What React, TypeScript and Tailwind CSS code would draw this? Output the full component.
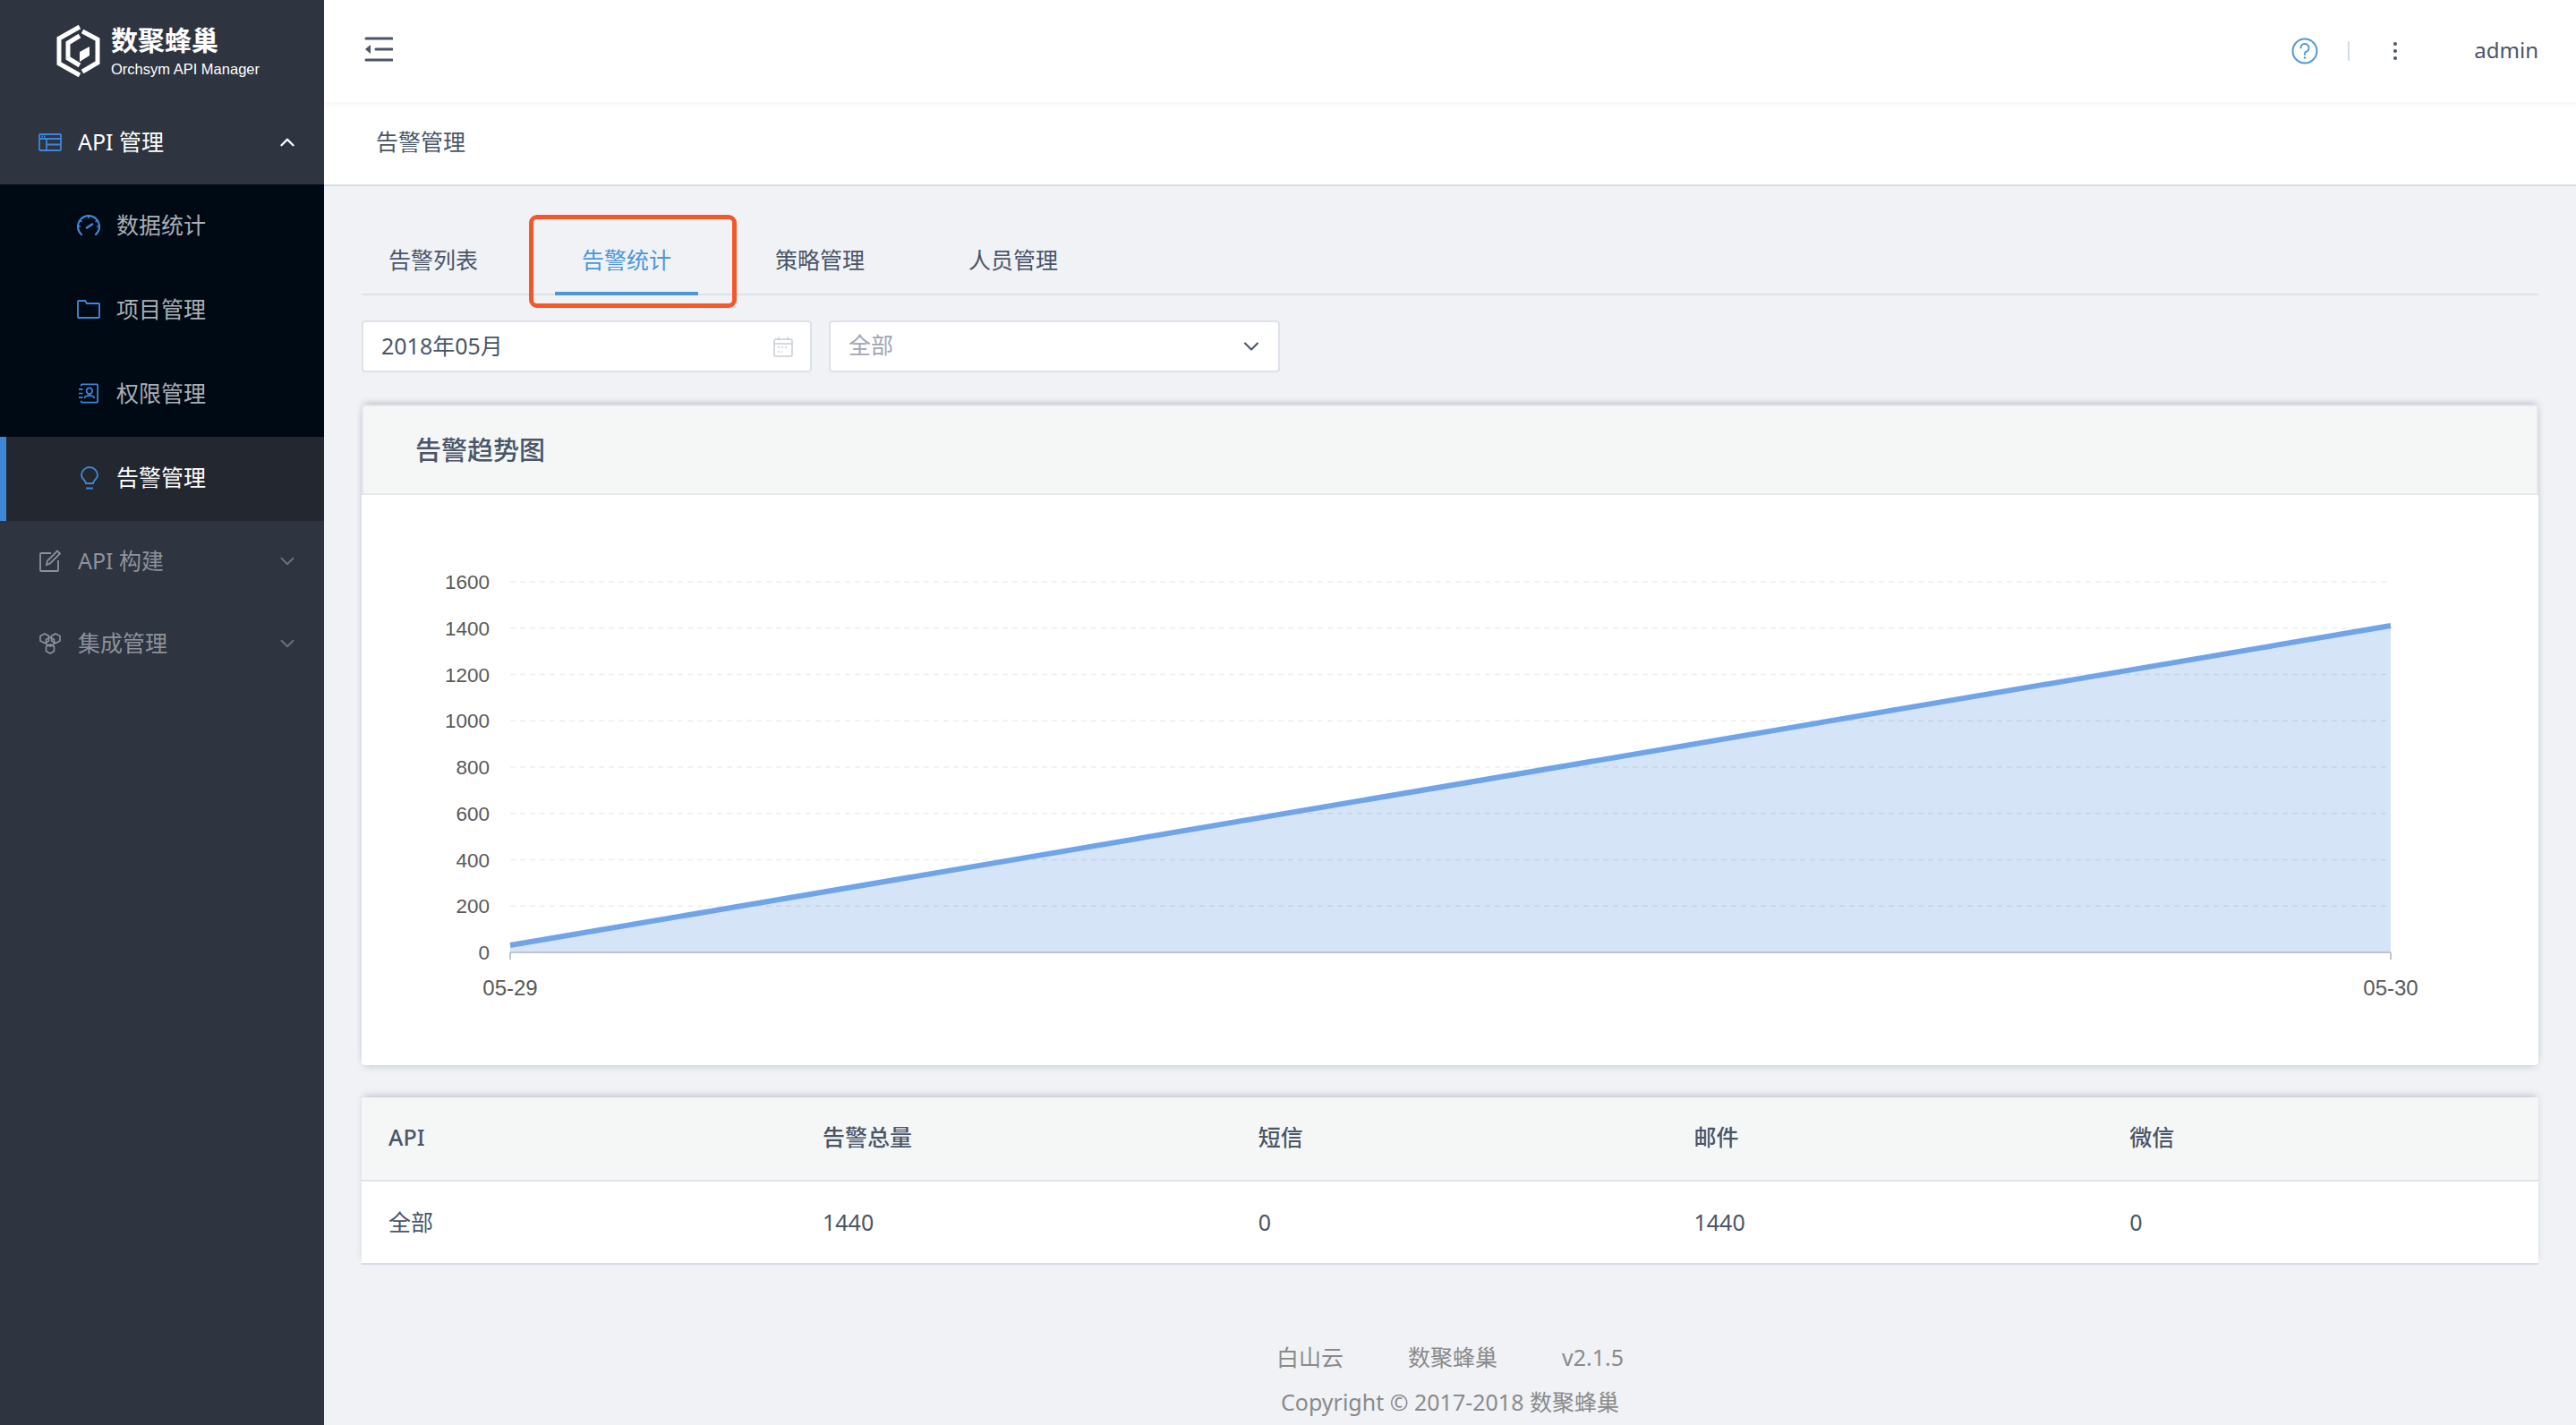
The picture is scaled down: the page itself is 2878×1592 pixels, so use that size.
// App.tsx
import React from 'react';
import { ChevronDown, ChevronUp } from 'lucide-react';

const LogoMark = () => (
  <svg width="50" height="60" viewBox="0 0 50 60" fill="none" stroke="#fff">
    <path d="M26 3 L3 16 V44 L26 57" strokeWidth="5" />
    <path d="M29 8 L46 17 V43 L29 53" strokeWidth="5" />
    <path d="M26 13 L13 21 V38 L26 46" strokeWidth="5" />
    <path d="M26 31 L37 25 V35 L26 42 Z" fill="#fff" stroke="none" />
  </svg>
);

const WindowIcon = () => (
  <svg width="26" height="20" viewBox="0 0 26 20" fill="none" stroke="#3f86d6" strokeWidth="1.8">
    <rect x="1" y="1" width="24" height="18" rx="1" />
    <path d="M1 6 H25 M9 6 V19 M9 12.5 H25" />
    <path d="M3.5 3.5 H8" strokeDasharray="1.5 1" />
  </svg>
);

const GaugeIcon = () => (
  <svg width="26" height="24" viewBox="0 0 26 24" fill="none" stroke="#3f86d6" strokeWidth="2.2">
    <path d="M5 22 A12 12 0 1 1 21 22" strokeLinecap="round" />
    <path d="M13 1 V4 M3.5 6 L5.5 8 M22.5 6 L20.5 8 M1 13 H4 M25 13 H22" strokeWidth="1.5" />
    <path d="M11 14.5 L17 10.5" strokeWidth="2.6" strokeLinecap="round" />
  </svg>
);

const FolderIcon = () => (
  <svg width="26" height="21" viewBox="0 0 26 21" fill="none" stroke="#3f86d6" strokeWidth="1.9">
    <path d="M1 19 a1 1 0 0 0 1 1 H24 a1 1 0 0 0 1 -1 V5 a1 1 0 0 0 -1 -1 H11 L9 1 H2 a1 1 0 0 0 -1 1 Z" />
  </svg>
);

const ContactIcon = () => (
  <svg className="ml-[2px]" width="22" height="23" viewBox="0 0 24 24" fill="none" stroke="#3f86d6" strokeWidth="1.9">
    <path d="M3 3 V2 a1 1 0 0 1 1 -1 H22 a1 1 0 0 1 1 1 V22 a1 1 0 0 1 -1 1 H4 a1 1 0 0 1 -1 -1 V21" />
    <circle cx="13" cy="9" r="3.6" />
    <path d="M7 18 C8 13.5 18 13.5 19 18" />
    <path d="M0 7 H5 M0 12 H5 M0 17 H5" />
  </svg>
);

const BulbIcon = () => (
  <svg width="20" height="26" viewBox="0 0 20 26" fill="none" stroke="#3f86d6" strokeWidth="1.9">
    <path d="M6 19 C6 16 1 14 1 10 A9 9 0 0 1 19 10 C19 14 14 16 14 19 Z" />
    <path d="M6 24.5 H14" strokeWidth="2" />
  </svg>
);

const EditIcon = () => (
  <svg width="24" height="25" viewBox="0 0 24 25" fill="none" stroke="#8d929b" strokeWidth="1.8">
    <path d="M13 4 H2 a1 1 0 0 0 -1 1 V23 a1 1 0 0 0 1 1 H20 a1 1 0 0 0 1 -1 V12" />
    <path d="M8 17 L9 12.5 L20 1.5 L23 4.5 L12 15.5 Z" />
  </svg>
);

const HexIcon = () => (
  <svg width="24" height="24" viewBox="0 0 24 24" fill="none" stroke="#8d929b" strokeWidth="1.6">
    <path d="M6 1 L10.5 3.5 V9 L6 11.5 L1 9 V3.5 Z" />
    <path d="M18 1 L23 3.5 V9 L18 11.5 L13.5 9 V3.5 Z" />
    <path d="M12 5 L16.5 7.5 V12.5 L12 15 L7.5 12.5 V7.5 Z" />
    <path d="M12 13 L16.5 15.5 V20.5 L12 23 L7.5 20.5 V15.5 Z" />
  </svg>
);

const CalendarIcon = () => (
  <svg width="22" height="23" viewBox="0 0 22 23" fill="none" stroke="#c8cdd6" strokeWidth="1.5">
    <rect x="1" y="3" width="20" height="19" rx="1.5" />
    <path d="M1 8 H21 M6 0.5 V4 M16 0.5 V4" />
    <path d="M5 12 H17 M5 17 H10" strokeDasharray="2 2" />
  </svg>
);

const Chart = () => {
  const labels = ['1600', '1400', '1200', '1000', '800', '600', '400', '200', '0'];
  return (
    <svg width="2432" height="637" viewBox="0 0 2432 637" className="block">
      <path d="M166 503 L2267 146 V511 H166 Z" fill="#d5e4f7" />
      {labels.map((label, i) => {
        const y = 97 + i * 51.75;
        return (
          <g key={label}>
            {i < 8 && <path d={`M166 ${y} H2267`} stroke="#000" strokeOpacity="0.07" strokeWidth="1.5" strokeDasharray="6 5" />}
            <text x="143" y={y + 8} textAnchor="end" fontSize="22.5" fill="#595959" fontFamily="'Liberation Sans', sans-serif">
              {label}
            </text>
          </g>
        );
      })}
      <path d="M166 511 H2267" stroke="#c0c4cc" strokeWidth="2" />
      <path d="M166 511 V519 M2267 511 V519" stroke="#c0c4cc" strokeWidth="2" />
      <path d="M166 503 L2267 146" stroke="#6fa5e8" strokeWidth="6" />
      <text x="166" y="559" textAnchor="middle" fontSize="24" fill="#595959" fontFamily="'Liberation Sans', sans-serif">05-29</text>
      <text x="2267" y="559" textAnchor="middle" fontSize="24" fill="#595959" fontFamily="'Liberation Sans', sans-serif">05-30</text>
    </svg>
  );
};

const subMenu = [
  { label: '数据统计', icon: <GaugeIcon /> },
  { label: '项目管理', icon: <FolderIcon /> },
  { label: '权限管理', icon: <ContactIcon /> },
];

const columns = ['API', '告警总量', '短信', '邮件', '微信'];
const row = ['全部', '1440', '0', '1440', '0'];

const Sidebar = () => (
  <aside className="w-[362px] shrink-0 bg-[#2e3440] text-[25px]">
    <div className="flex h-[114px] items-center pl-[63px]">
      <LogoMark />
      <div className="ml-[11px] flex flex-col pt-[4px]">
        <span className="text-[30px] font-bold leading-[36px] text-white">数聚蜂巢</span>
        <span className="text-[16.5px] font-medium leading-[28px] text-white font-['Liberation_Sans']">Orchsym API Manager</span>
      </div>
    </div>
    <div className="flex h-[92px] items-center pb-[2px] pl-[43px] pr-[28px] text-white">
      <span className="flex w-[44px] shrink-0"><WindowIcon /></span>
      <span>API 管理</span>
      <ChevronUp className="ml-auto" size={26} strokeWidth={2.2} color="#fff" />
    </div>
    <div className="bg-[#000a14] text-[#a9afb8]">
      {subMenu.map((item) => (
        <div key={item.label} className="flex h-[94px] items-center pb-[3px] pl-[86px]">
          <span className="flex w-[44px] shrink-0">{item.icon}</span>
          <span>{item.label}</span>
        </div>
      ))}
    </div>
    <div className="flex h-[94px] items-center border-l-[7px] border-[#3f86d6] bg-[#23272f] pb-[3px] pl-[83px] text-white">
      <span className="flex w-[40px] shrink-0"><BulbIcon /></span>
      <span>告警管理</span>
    </div>
    <div className="flex h-[92px] items-center pb-[3px] pl-[44px] pr-[28px] text-[#8d929b]">
      <span className="flex w-[43px] shrink-0"><EditIcon /></span>
      <span>API 构建</span>
      <ChevronDown className="ml-auto" size={26} strokeWidth={1.8} color="#6b717c" />
    </div>
    <div className="flex h-[92px] items-center pb-[3px] pl-[44px] pr-[28px] text-[#8d929b]">
      <span className="flex w-[43px] shrink-0"><HexIcon /></span>
      <span>集成管理</span>
      <ChevronDown className="ml-auto" size={26} strokeWidth={1.8} color="#6b717c" />
    </div>
  </aside>
);

const Header = () => (
  <>
    <header className="relative z-10 flex h-[114px] items-center bg-white pl-[45px] pr-[42px] shadow-[0_2px_6px_rgba(0,0,0,0.05)]">
      <svg className="mb-[4px]" width="32" height="28" viewBox="0 0 32 28" fill="none" stroke="#4a5568" strokeWidth="3" strokeLinecap="round">
        <path d="M2 2 H31 M13 14 H31 M2 26 H31" />
        <path d="M1 14 L7 9 V19 Z" fill="#4a5568" stroke="none" />
      </svg>
      <svg className="ml-auto" width="30" height="30" viewBox="0 0 30 30" fill="none" stroke="#529adb" strokeWidth="2">
        <circle cx="15" cy="15" r="13.5" />
        <path d="M10.5 11.5 A4.5 4.5 0 1 1 16 16 C15 16.5 15 17.5 15 19" strokeLinecap="round" />
        <circle cx="15" cy="22.5" r="1.3" fill="#529adb" stroke="none" />
      </svg>
      <span className="ml-[33px] h-[22px] w-[2px] bg-[#d3dbe7]" />
      <svg className="ml-[48px]" width="6" height="24" viewBox="0 0 6 24" fill="#4a5568">
        <circle cx="3" cy="4" r="2" />
        <circle cx="3" cy="12" r="2" />
        <circle cx="3" cy="20" r="2" />
      </svg>
      <span className="mb-[3px] ml-[85px] text-[24px] text-[#4a5568]">admin</span>
    </header>
    <div className="flex h-[94px] shrink-0 items-center border-b-2 border-[#d8dbe6] bg-white pb-[2px] pl-[58px] text-[25px] text-[#4a5568]">
      告警管理
    </div>
  </>
);

const App: React.FC = () => (
  <div className="flex h-[1592px] overflow-hidden bg-[#f0f2f6] font-['Noto_Sans','Noto_Sans_CJK_SC',sans-serif]">
    <Sidebar />
    <main className="flex min-w-0 flex-1 flex-col">
      <Header />
      <div className="px-[42px] pt-[46px]">
        <div className="relative flex gap-[56px] border-b-2 border-[#dde1ea] text-[25px] text-[#4a5568]">
          <div className="flex h-[74px] items-center px-[30px]">告警列表</div>
          <div className="-mb-[2px] flex h-[76px] items-center border-b-4 border-[#4d96d9] px-[30px] pt-[2px] text-[#4d96d9]">告警统计</div>
          <div className="flex h-[74px] items-center px-[30px]">策略管理</div>
          <div className="flex h-[74px] items-center px-[30px]">人员管理</div>
          <div className="absolute left-[187px] top-[-14px] h-[104px] w-[232px] rounded-[9px] border-[5px] border-[#f4572a]" />
        </div>

        <div className="mt-[28px] flex gap-[19px] text-[25px]">
          <div className="flex h-[58px] w-[503px] items-center justify-between rounded-[4px] border-2 border-[#dde1ea] bg-white pl-[20px] pr-[19px] text-[#4a5568]">
            <span>2018年05月</span>
            <CalendarIcon />
          </div>
          <div className="flex h-[58px] w-[504px] items-center justify-between rounded-[4px] border-2 border-[#dde1ea] bg-white pl-[20px] pr-[16px] text-[#a0a6b1]">
            <span className="mb-[3px]">全部</span>
            <ChevronDown size={28} strokeWidth={1.8} color="#4a5568" />
          </div>
        </div>

        <section className="mt-[36px] rounded-[4px] bg-white shadow-[0_-4px_8px_-3px_rgba(40,50,70,0.3),0_4px_8px_-3px_rgba(40,50,70,0.22)]">
          <div className="flex h-[101px] items-center border-2 border-[#e4e7ec] bg-[#f5f7f7] pl-[58px] text-[29px] font-medium text-[#4a5568]">
            告警趋势图
          </div>
          <Chart />
        </section>

        <section className="mt-[36px] bg-white text-[25px] text-[#4a5568] shadow-[0_-4px_8px_-3px_rgba(40,50,70,0.3)]">
          <div className="grid h-[94px] grid-cols-[485px_1fr_1fr_1fr_1fr] items-center border-b-2 border-[#e0e3e9] bg-[#f5f7f7] pb-[2px] font-medium">
            {columns.map((col) => (
              <div key={col} className="pl-[30px]">{col}</div>
            ))}
          </div>
          <div className="grid h-[93px] grid-cols-[485px_1fr_1fr_1fr_1fr] items-center border-b-2 border-[#d8dbe6]">
            {row.map((cell, i) => (
              <div key={i} className="pl-[30px]">{cell}</div>
            ))}
          </div>
        </section>

        <footer className="mt-[78px] flex flex-col items-center text-[25px] leading-[50px] text-[#8a8a8a]">
          <div className="flex gap-[72px]">
            <span>白山云</span>
            <span>数聚蜂巢</span>
            <span>v2.1.5</span>
          </div>
          <div>Copyright © 2017-2018 数聚蜂巢</div>
        </footer>
      </div>
    </main>
  </div>
);

export default App;
